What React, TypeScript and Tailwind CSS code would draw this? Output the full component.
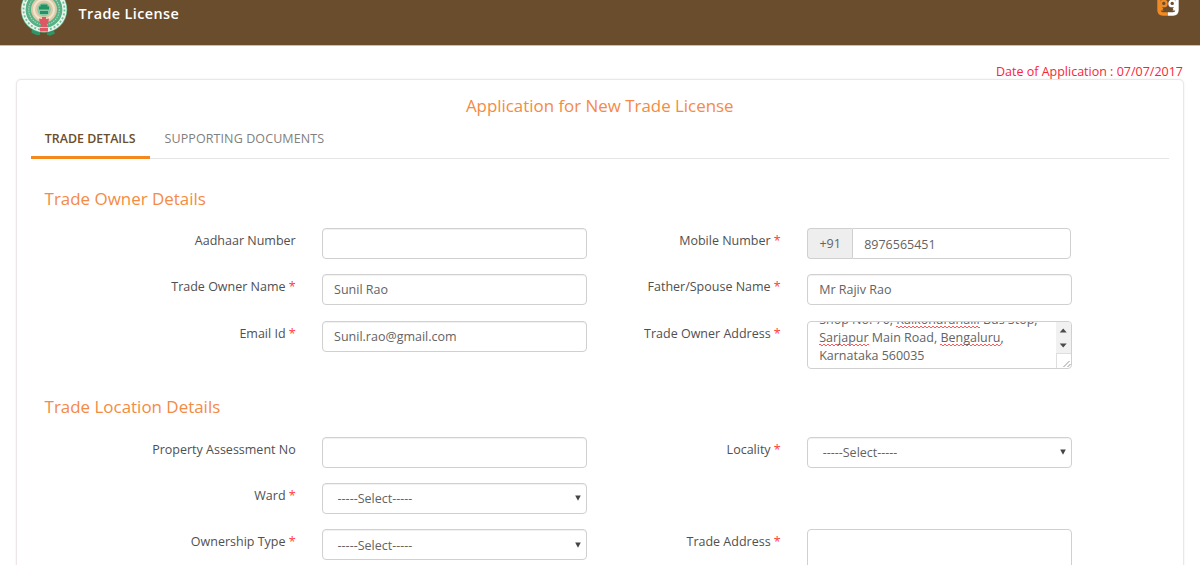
import type { ReactNode } from 'react';

const box =
  'block w-full h-[31px] rounded-[4px] border border-[#d0d0d0] bg-white px-[11px] text-[12.5px] text-[#636363] shadow-[inset_0_1px_1px_rgba(0,0,0,0.06)] outline-none';

function Label({ text, required }: { text: string; required?: boolean }) {
  return (
    <div className="pt-[4px] text-right text-[12.5px] leading-[18px] whitespace-nowrap text-[#505050]">
      {text}
      {required && <span className="text-[#ff3b3b]"> *</span>}
    </div>
  );
}

function Input({ value = '' }: { value?: string }) {
  return <div className={box + ' pt-[7px] leading-[16.6px]'}>{value}</div>;
}

function Select() {
  return (
    <div className={box + ' flex items-center justify-between !pr-[5px] !pl-[14.5px]'}>
      <span className="pt-[2px] leading-[16px]">-----Select-----</span>
      <svg width="6" height="6" viewBox="0 0 6 6">
        <path d="M0.2 0.5h5.6L3 5.8z" fill="#444" />
      </svg>
    </div>
  );
}

function Misspelt({ children }: { children: ReactNode }) {
  return (
    <span className="bg-[linear-gradient(45deg,transparent_35%,#ff5a5a_35%,#ff5a5a_65%,transparent_65%),linear-gradient(135deg,transparent_35%,#ff5a5a_35%,#ff5a5a_65%,transparent_65%)] bg-[length:4px_2px,4px_2px] bg-[position:0_100%,2px_100%] bg-repeat-x">
      {children}
    </span>
  );
}

function AddressBox() {
  return (
    <div className="flex h-[48px] w-full overflow-hidden rounded-[4px] border border-[#d0d0d0] bg-white">
      <div className="h-full flex-1 overflow-hidden pl-[11px] text-[12.5px] leading-[18px] whitespace-nowrap text-[#636363]">
        <div className="-mt-[11px]">
          Shop No. 70, <Misspelt>Kaikondrahalli</Misspelt> Bus Stop,
        </div>
        <div>
          <Misspelt>Sarjapur</Misspelt> Main Road, <Misspelt>Bengaluru</Misspelt>,
        </div>
        <div>Karnataka 560035</div>
      </div>
      <svg width="15" height="46" viewBox="0 0 15 46">
        <rect width="15" height="32" fill="#f1f1f1" />
        <path d="M0 31.5h15M0.5 32v14" stroke="#dedede" fill="none" />
        <path d="M3.7 10.5L7.2 6.5l3.5 4zM3.7 21.5h7l-3.5 4z" fill="#4b4b4b" />
        <path d="M7.5 45l6-6M11.5 45l3-3" stroke="#888" strokeWidth="0.9" />
      </svg>
    </div>
  );
}

function Fields({ rows }: { rows: ReactNode[][] }) {
  return (
    <div>
      {rows.map((r, i) => (
        <div
          key={i}
          className="grid h-[46.4px] grid-cols-[251.5px_264.8px_167.5px_264.8px] items-start gap-x-[26.4px]"
        >
          {r.map((c, j) => (
            <div key={j}>{c}</div>
          ))}
        </div>
      ))}
    </div>
  );
}

function Emblem() {
  return (
    <svg width="48" height="45" viewBox="0 0 48 45">
      <path d="M12 29l8 3v3l-3 .3-4-1.8-1.5-1zM34 31l1 2.5-5 2.3-3-1v-2z" fill="#2f9568" />
      <circle cx="24" cy="9.5" r="23.3" fill="#56b285" />
      <circle cx="24" cy="9.5" r="20.5" fill="none" stroke="#e9f3ec" strokeWidth="4.2" />
      <circle cx="24" cy="9.5" r="20.5" fill="none" stroke="#74c09b" strokeWidth="1.8" strokeDasharray="2 2" />
      <circle cx="24" cy="9.5" r="18" fill="#55b184" />
      <circle cx="24" cy="9.5" r="15.3" fill="none" stroke="#a4d4ba" strokeWidth="1.2" strokeDasharray="1.5 1" />
      <circle cx="24" cy="9.5" r="13" fill="#dcc9a5" />
      <circle cx="24" cy="9.5" r="10" fill="none" stroke="#eee4d0" strokeWidth="2" />
      <circle cx="24" cy="9.5" r="6.8" fill="#86c8a5" />
      <path d="M20.5 4.5h7v2h1.5v3h-10v-3h1.5zM20 11h8v3h-8z" fill="#249263" />
      <path d="M22 17h4v2l3-.5-1 5-1 1v2h1v5h-8v-5h1v-2l-1-1-1-5 3 .5z" fill="#dc5865" />
      <path d="M20 27.5h8" stroke="#f0bcc0" />
    </svg>
  );
}

function Brand() {
  return (
    <svg width="22" height="17" viewBox="0 0 22 17">
      <path d="M11 14H6Q2 14 2 10V0" fill="none" stroke="#f08a24" strokeWidth="3.4" />
      <circle cx="6.8" cy="3.4" r="2.8" fill="none" stroke="#f08a24" strokeWidth="2.2" />
      <path d="M3 4.500h2v2.500l2.500 3.500h-4.500z" fill="#f08a24" />
      <path d="M11 14H16Q20 14 20 10V0" fill="none" stroke="#fff" strokeWidth="3.4" />
      <circle cx="15.2" cy="3.4" r="2.8" fill="none" stroke="#fff" strokeWidth="2.2" />
      <path d="M19 4.500h-2v2.500l-2.500 3.500h4.500z" fill="#fff" />
      <path d="M5.500 9.200Q11 7.200 16.500 9.200Q15.500 12 11 12Q6.500 12 5.500 9.200z" fill="#6a4d2c" />
    </svg>
  );
}

export default function App() {
  return (
    <div className="h-[565px] w-full overflow-hidden bg-white font-['Open_Sans',sans-serif]">
      <header className="flex h-[46px] w-full items-start border-b border-[#c9bfb2] bg-[#6a4d2c] pl-[20px] pr-[21px]">
        <Emblem />
        <h1 className="ml-[10.5px] pt-[3.5px] text-[14.4px] leading-[19px] font-semibold tracking-[0.4px] text-white">
          Trade License
        </h1>
        <div className="ml-auto">
          <Brand />
        </div>
      </header>
      <div className="h-[33px] pt-[16px] pr-[17px] text-right text-[12.5px] leading-[19px] text-[#fa2438]">
        Date of Application : 07/07/2017
      </div>
      <main className="mr-[16px] ml-[15.5px] h-[560px] rounded-[5px] border border-[#ece6e8] bg-white px-[14.5px] shadow-[0_0_2px_rgba(120,90,100,0.12)]">
        <h2 className="pt-[14px] text-center text-[16.9px] leading-[24px] text-[#f58a45]">
          Application for New Trade License
        </h2>
        <nav className="mt-[1px] flex h-[40px] border-b border-[#e5e5e5] text-[12.4px] leading-[18px] font-semibold">
          <div className="h-[40px] w-[118.5px] border-b-[3px] border-[#f5871f] pt-[10.6px] text-center whitespace-nowrap text-[#6a4d2c]">
            TRADE DETAILS
          </div>
          <div className="ml-[15px] pt-[10.6px] text-[12.5px] font-medium tracking-[0.1px] whitespace-nowrap text-[#808080]">
            SUPPORTING DOCUMENTS
          </div>
        </nav>
        <div className="pl-[13.2px]">
          <h3 className="mt-[28px] mb-[17px] pl-[0.4px] text-[16.95px] leading-[24px] text-[#f58a45]">Trade Owner Details</h3>
          <Fields
            rows={[
              [
                <Label text="Aadhaar Number" />,
                <Input />,
                <Label text="Mobile Number" required />,
                <div className="flex h-[31px] w-[264px] text-[12.5px] text-[#636363]">
                  <span className="w-[45px] rounded-l-[4px] border border-r-0 border-[#d0d0d0] bg-[#eee] pt-[6px] text-center leading-[17px]">
                    +91
                  </span>
                  <span className="flex-1 rounded-r-[4px] border border-[#d0d0d0] pt-[7px] pl-[11px] leading-[17px]">
                    8976565451
                  </span>
                </div>,
              ],
              [
                <Label text="Trade Owner Name" required />,
                <Input value="Sunil Rao" />,
                <Label text="Father/Spouse Name" required />,
                <Input value="Mr Rajiv Rao" />,
              ],
              [
                <Label text="Email Id" required />,
                <Input value="Sunil.rao@gmail.com" />,
                <Label text="Trade Owner Address" required />,
                <AddressBox />,
              ],
            ]}
          />
          <h3 className="mt-[28px] mb-[17.35px] pl-[0.4px] text-[16.95px] leading-[24px] text-[#f58a45]">Trade Location Details</h3>
          <Fields
            rows={[
              [<Label text="Property Assessment No" />, <Input />, <Label text="Locality" required />, <Select />],
              [<Label text="Ward" required />, <Select />],
              [
                <Label text="Ownership Type" required />,
                <Select />,
                <Label text="Trade Address" required />,
                <div className="h-[60px] rounded-[4px] border border-[#d0d0d0]" />,
              ],
            ]}
          />
        </div>
      </main>
    </div>
  );
}
